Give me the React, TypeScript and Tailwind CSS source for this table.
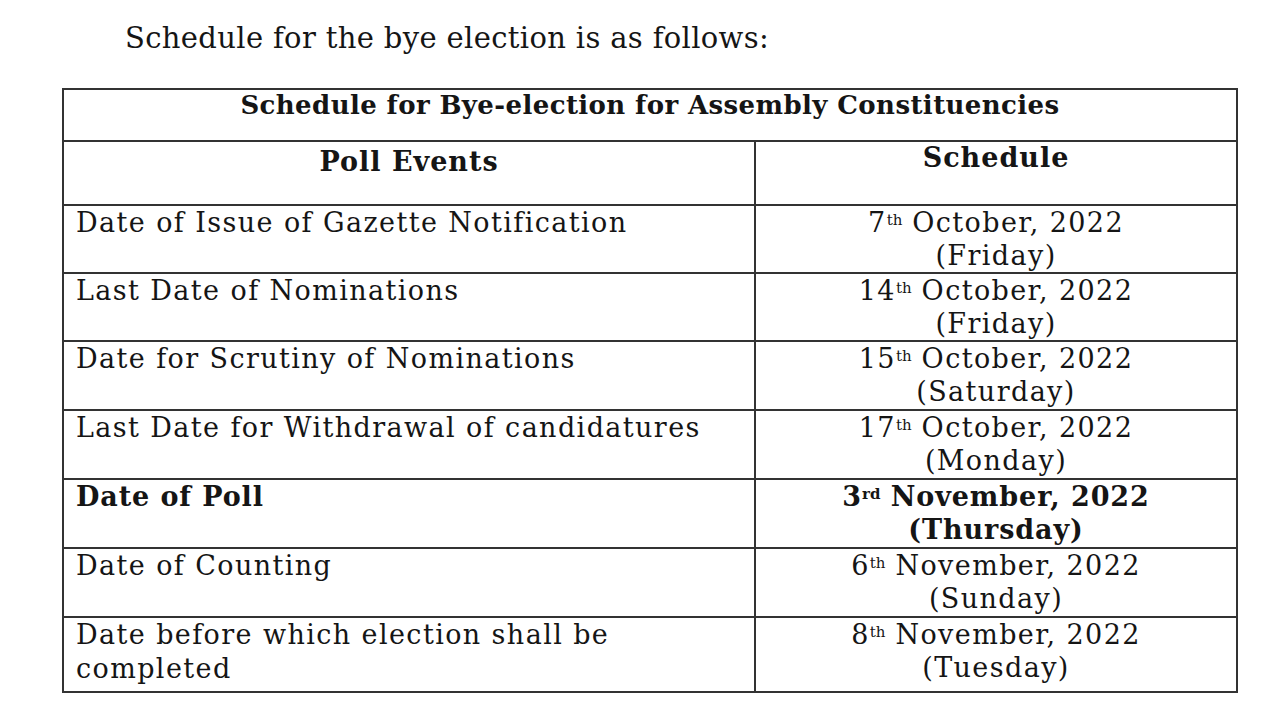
const rows = [
  { event: 'Date of Issue of Gazette Notification', day: '7', sup: 'th', month: 'October, 2022', weekday: 'Friday', h: 'h-[66px]' },
  { event: 'Last Date of Nominations', day: '14', sup: 'th', month: 'October, 2022', weekday: 'Friday', h: 'h-[68px]' },
  { event: 'Date for Scrutiny of Nominations', day: '15', sup: 'th', month: 'October, 2022', weekday: 'Saturday', h: 'h-[69px]' },
  { event: 'Last Date for Withdrawal of candidatures', day: '17', sup: 'th', month: 'October, 2022', weekday: 'Monday', h: 'h-[69px]' },
  { event: 'Date of Poll', day: '3', sup: 'rd', month: 'November, 2022', weekday: 'Thursday', h: 'h-[69px]', bold: true },
  { event: 'Date of Counting', day: '6', sup: 'th', month: 'November, 2022', weekday: 'Sunday', h: 'h-[69px]' },
  { event: 'Date before which election shall be', event2: 'completed', day: '8', sup: 'th', month: 'November, 2022', weekday: 'Tuesday', h: 'h-[75px]' },
];

export default function App() {
  return (
    <div className="w-[1280px] h-[720px] bg-white text-[#151515] overflow-hidden">
      <p className="pl-[125px] pt-[18px] text-[29px] leading-[40px] tracking-[0.35px] font-['DejaVu_Serif',serif]">
        Schedule for the bye election is as follows:
      </p>

      <table className="ml-[62px] mt-[30px] w-[1176px] font-['DejaVu_Serif',serif] text-[27px]">
        <tbody>
          <tr className="h-[52px]">
            <td colSpan={2} className="border-2 border-[#333] text-center align-top pt-[1px] text-[26px] tracking-[0.4px] font-bold leading-[28px]">
              Schedule for Bye-election for Assembly Constituencies
            </td>
          </tr>
          <tr className="h-[64px]">
            <th className="w-[692px] border-2 border-[#333] align-top pt-[4px] text-[27px] tracking-[1px] font-bold leading-[32px]">
              Poll Events
            </th>
            <th className="border-2 border-[#333] align-top pt-0 text-[27px] tracking-[1px] font-bold leading-[32px]">
              Schedule
            </th>
          </tr>
          {rows.map((r) => (
            <tr key={r.event} className={r.h}>
              <td className={`border-2 border-[#333] align-top pl-[12px] pt-0 leading-[34px] ${r.bold ? 'font-bold tracking-[0.9px]' : 'tracking-[1.4px]'}`}>
                {r.event}
                {r.event2 && (
                  <>
                    <br />
                    {r.event2}
                  </>
                )}
              </td>
              <td className={`border-2 border-[#333] align-top text-center leading-[33px] ${r.bold ? 'font-bold tracking-[0.9px]' : 'tracking-[1.4px]'}`}>
                {r.day}
                <sup className="text-[15px] tracking-normal">{r.sup}</sup> {r.month}
                <br />({r.weekday})
              </td>
            </tr>
          ))}
        </tbody>
      </table>
    </div>
  );
}
